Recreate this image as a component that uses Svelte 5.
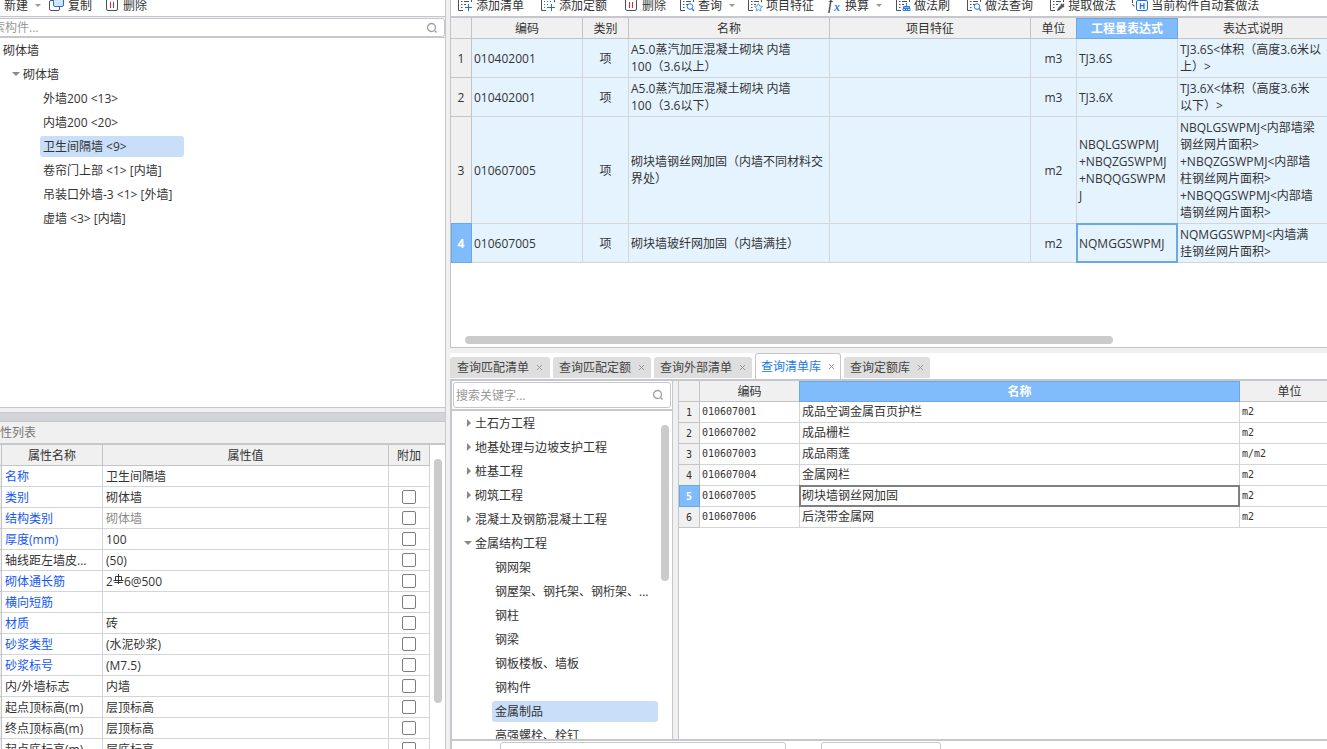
<script>
  let keyword = $state("");
  let libKeyword = $state("");
  let currentComponent = $state("卫生间隔墙 <9>");
  let currentChapter = $state("金属制品");
  let activeTab = $state("查询清单库");

  const components = [
    "外墙200 <13>",
    "内墙200 <20>",
    "卫生间隔墙 <9>",
    "卷帘门上部 <1> [内墙]",
    "吊装口外墙-3 <1> [外墙]",
    "虚墙 <3> [内墙]",
  ];

  const properties = [
    { name: "名称", value: "卫生间隔墙", blue: true, noCheck: true },
    { name: "类别", value: "砌体墙", blue: true },
    { name: "结构类别", value: "砌体墙", blue: true, muted: true },
    { name: "厚度(mm)", value: "100", blue: true },
    { name: "轴线距左墙皮...", value: "(50)" },
    { name: "砌体通长筋", value: "6@500", blue: true, rebar: "2" },
    { name: "横向短筋", value: "", blue: true },
    { name: "材质", value: "砖", blue: true },
    { name: "砂浆类型", value: "(水泥砂浆)", blue: true },
    { name: "砂浆标号", value: "(M7.5)", blue: true },
    { name: "内/外墙标志", value: "内墙" },
    { name: "起点顶标高(m)", value: "层顶标高" },
    { name: "终点顶标高(m)", value: "层顶标高" },
    { name: "起点底标高(m)", value: "层底标高" },
  ];

  const toolGroups = [
    [
      { icon: "add", label: "添加清单" },
      { icon: "addQuota", label: "添加定额" },
      { icon: "trash", label: "删除" },
    ],
    [
      { icon: "query", label: "查询", menu: true },
      { icon: "feature", label: "项目特征" },
      { icon: "fx", label: "换算", menu: true },
    ],
    [
      { icon: "brush", label: "做法刷" },
      { icon: "query", label: "做法查询" },
      { icon: "extract", label: "提取做法" },
      { icon: "auto", label: "当前构件自动套做法" },
    ],
  ];

  const items = [
    {
      code: "010402001",
      name: "A5.0蒸汽加压混凝土砌块 内墙\n100（3.6以上）",
      unit: "m3",
      expr: "TJ3.6S",
      desc: "TJ3.6S<体积（高度3.6米以\n上）>",
    },
    {
      code: "010402001",
      name: "A5.0蒸汽加压混凝土砌块 内墙\n100（3.6以下）",
      unit: "m3",
      expr: "TJ3.6X",
      desc: "TJ3.6X<体积（高度3.6米\n以下）>",
    },
    {
      code: "010607005",
      name: "砌块墙钢丝网加固（内墙不同材料交\n界处）",
      unit: "m2",
      expr: "NBQLGSWPMJ\n+NBQZGSWPMJ\n+NBQQGSWPM\nJ",
      desc: "NBQLGSWPMJ<内部墙梁\n钢丝网片面积>\n+NBQZGSWPMJ<内部墙\n柱钢丝网片面积>\n+NBQQGSWPMJ<内部墙\n墙钢丝网片面积>",
    },
    {
      code: "010607005",
      name: "砌块墙玻纤网加固（内墙满挂）",
      unit: "m2",
      expr: "NQMGGSWPMJ",
      desc: "NQMGGSWPMJ<内墙满\n挂钢丝网片面积>",
    },
  ];

  const tabs = ["查询匹配清单", "查询匹配定额", "查询外部清单", "查询清单库", "查询定额库"];

  const chapters = [
    { label: "土石方工程" },
    { label: "地基处理与边坡支护工程" },
    { label: "桩基工程" },
    { label: "砌筑工程" },
    { label: "混凝土及钢筋混凝土工程" },
    {
      label: "金属结构工程",
      children: [
        "钢网架",
        "钢屋架、钢托架、钢桁架、...",
        "钢柱",
        "钢梁",
        "钢板楼板、墙板",
        "钢构件",
        "金属制品",
        "高强螺栓、栓钉",
      ],
    },
  ];

  const library = [
    ["010607001", "成品空调金属百页护栏", "m2"],
    ["010607002", "成品栅栏", "m2"],
    ["010607003", "成品雨蓬", "m/m2"],
    ["010607004", "金属网栏", "m2"],
    ["010607005", "砌块墙钢丝网加固", "m2"],
    ["010607006", "后浇带金属网", "m2"],
  ];
</script>

{#snippet icon(kind)}
  <svg class="icon" viewBox="0 0 16 16" aria-hidden="true">
    {#if kind === "copy"}
      <rect x="0.5" y="3.5" width="10" height="10" rx="1.5" fill="#fff" stroke="#4a5162" />
      <rect x="4.5" y="-0.5" width="10" height="10" rx="1.5" fill="#cfe3fb" stroke="#1f6fe0" />
    {:else if kind === "trash"}
      <path d="M1 2.5h14M5.500 2.500v-2h5v2" stroke="#4a5162" />
      <path d="M2.500 2.500v9.500a1.500 1.500 0 0 0 1.500 1.500h8a1.500 1.500 0 0 0 1.500-1.500v-9.500" stroke="#4a5162" />
      <path d="M6.500 5v6M9.500 5v6" stroke="#d92b2b" />
    {:else if kind === "fx"}
      <text x="2" y="12" class="fx-f">f</text>
      <text x="8" y="14" class="fx-x">x</text>
    {:else if kind === "auto"}
      <path d="M0.500 1v6a2 2 0 0 0 2 2" stroke="#4a5162" stroke-dasharray="5 1" />
      <rect x="4.500" y="3.500" width="11" height="10" rx="1.500" fill="#fff" stroke="#1f6fe0" />
      <text x="10" y="12" class="auto-h">H</text>
    {:else}
      <path d="M6 13.500h-4.500v-13h13v4.500" stroke="#4a5162" />
      {#if kind === "addQuota"}
        <path d="M4 4.500h1M7 4.500h1M10 4.500h1M4 7.500h1M7 7.500h1M4 10.500h1M7 10.500h1" stroke="#1f6fe0" />
      {:else}
        <path d="M4 4.500h1.500M7 4.500h5M4 7.500h1.500M7 7.500h2M4 10.500h1.500" stroke="#4a5162" />
      {/if}
      {#if kind === "add" || kind === "addQuota"}
        <path d="M8 10.500h7M11.500 7v7" stroke="#1f6fe0" />
      {:else if kind === "query"}
        <circle cx="11" cy="9.500" r="2.800" stroke="#2f7de0" />
        <path d="M13 11.500l2 2.500" stroke="#2f7de0" stroke-width="1.300" />
      {:else if kind === "feature"}
        <path
          d="M11.500 6.500l1.300 2.500 2.700.4-2 1.900.5 2.700-2.500-1.300-2.500 1.300.5-2.700-2-1.900 2.700-.4z"
          fill="#eaf3ff"
          stroke="#4a90e2"
          stroke-width="0.800"
        />
      {:else if kind === "brush"}
        <path d="M11.500 6v3M8.500 9.500h6v1.500h-6zM8 13.500v-2h7v2zM10.500 12v1.500M12.500 12v1.500" fill="#d6e8ff" stroke="#2f7de0" />
      {:else if kind === "extract"}
        <path d="M8.500 13.500l1-2.500 3-3 1.500 1.500-3 3z" fill="#4a5162" stroke="#4a5162" stroke-width="0.800" />
        <path d="M12 7l3 3M13.500 8.500l1.500-1.500" stroke="#4a5162" stroke-width="1.600" />
      {/if}
    {/if}
  </svg>
{/snippet}

{#snippet searchIcon()}
  <svg class="search-icon" viewBox="0 0 12 12" aria-hidden="true">
    <circle cx="5.500" cy="5.500" r="4" stroke="#a0a0a0" stroke-width="1.300" />
    <path d="M8.500 8.500l2 2" stroke="#a0a0a0" stroke-width="1.300" />
  </svg>
{/snippet}

<main>
  <aside>
    <div class="toolbar component-tools">
      <div class="group">
        <button class="tool">新建<i class="caret"></i></button>
      </div>
      <div class="group">
        <button class="tool">{@render icon("copy")}复制</button>
        <button class="tool">{@render icon("trash")}删除</button>
      </div>
    </div>
    <div class="search component-search">
      <input type="text" aria-label="搜索构件" placeholder="搜索构件..." bind:value={keyword} />
      {@render searchIcon()}
    </div>
    <ul class="tree component-tree">
      <li><button class="node">砌体墙</button></li>
      <li class="level1"><button class="node"><i class="arrow open"></i>砌体墙</button></li>
      {#each components as c}
        <li class="level2">
          <button class="node" class:current={c === currentComponent} onclick={() => (currentComponent = c)}>{c}</button>
        </li>
      {/each}
    </ul>

    <div class="splitter"></div>
    <h2>属性列表</h2>
    <div class="props">
      <table>
        <colgroup>
          <col class="w22" /><col class="w101" /><col /><col class="w41" />
        </colgroup>
        <thead>
          <tr><th></th><th>属性名称</th><th>属性值</th><th>附加</th></tr>
        </thead>
        <tbody>
          {#each properties as p, i}
            <tr>
              <th>{i + 1}</th>
              <td class:blue={p.blue}>{p.name}</td>
              <td class:muted={p.muted}>
                {#if p.rebar}
                  {p.rebar}<svg class="rebar" viewBox="0 0 11 11" role="img" aria-label="三级钢">
                    <path d="M5.500 0v10M2.500 2.500h6v4h-6zM0.500 6.500h10M1.500 8.500h8" stroke="#333" />
                  </svg>{p.value}
                {:else}
                  {p.value}
                {/if}
              </td>
              <td class="check">
                {#if !p.noCheck}
                  <input type="checkbox" aria-label="附加 {p.name}" />
                {/if}
              </td>
            </tr>
          {/each}
        </tbody>
      </table>
      <div class="vbar"></div>
    </div>
  </aside>

  <div class="work">
    <section class="bill">
      <div class="toolbar">
        {#each toolGroups as group}
          <div class="group">
            {#each group as t}
              <button class="tool">
                {@render icon(t.icon)}{t.label}{#if t.menu}<i class="caret"></i>{/if}
              </button>
            {/each}
          </div>
        {/each}
      </div>
      <table>
        <colgroup>
          <col class="w21" /><col class="w111" /><col class="w46" /><col class="w201" />
          <col class="w201" /><col class="w46" /><col class="w101" /><col />
        </colgroup>
        <thead>
          <tr>
            <th></th>
            <th>编码</th>
            <th>类别</th>
            <th>名称</th>
            <th>项目特征</th>
            <th>单位</th>
            <th class="picked">工程量表达式</th>
            <th>表达式说明</th>
          </tr>
        </thead>
        <tbody>
          {#each items as item, i}
            <tr>
              <th scope="row" class:picked={i === 3}>{i + 1}</th>
              <td>{item.code}</td>
              <td class="mid">项</td>
              <td>{item.name}</td>
              <td></td>
              <td class="mid">{item.unit}</td>
              <td class:focused={i === 3}>{item.expr}</td>
              <td>{item.desc}</td>
            </tr>
          {/each}
        </tbody>
      </table>
      <div class="hbar"></div>
    </section>

    <nav class="tabs">
      {#each tabs as tab}
        <button class="tab" class:active={tab === activeTab} onclick={() => (activeTab = tab)}>
          {tab}
          <svg viewBox="0 0 7 7" aria-hidden="true"><path d="M1 1l5 5M6 1l-5 5" stroke="#999" /></svg>
        </button>
      {/each}
    </nav>

    <div class="lookup">
      <div class="chapters">
        <div class="search lib-search">
          <input type="text" aria-label="搜索关键字" placeholder="搜索关键字..." bind:value={libKeyword} />
          {@render searchIcon()}
        </div>
        <div class="chapter-list">
          <ul class="tree">
            {#each chapters as ch}
              <li class="level1">
                <button class="node"><i class="arrow" class:open={ch.children}></i>{ch.label}</button>
              </li>
              {#each ch.children ?? [] as child}
                <li class="level2">
                  <button class="node" class:current={child === currentChapter} onclick={() => (currentChapter = child)}>
                    {child}
                  </button>
                </li>
              {/each}
            {/each}
          </ul>
          <div class="vbar"></div>
        </div>
      </div>
      <div class="results">
        <table>
          <colgroup>
            <col class="w21" /><col class="w100" /><col /><col class="w100" />
          </colgroup>
          <thead>
            <tr><th></th><th>编码</th><th class="picked">名称</th><th>单位</th></tr>
          </thead>
          <tbody>
            {#each library as [code, name, unit], i}
              <tr>
                <th scope="row" class:picked={i === 4}>{i + 1}</th>
                <td class="mono">{code}</td>
                <td class:focused={i === 4}>{name}</td>
                <td class="mono">{unit}</td>
              </tr>
            {/each}
          </tbody>
        </table>
      </div>
    </div>

    <footer>
      <input class="wide" type="text" aria-label="章节" />
      <input type="text" aria-label="专业" />
    </footer>
  </div>
</main>

<style>
  :global(body) {
    background: #f0f0f0;
  }
  main {
    display: flex;
    gap: 4px;
    height: 100vh;
    overflow: hidden;
    font: 12px/17px "Open Sans", "Noto Sans CJK SC", sans-serif;
    color: #333;
  }
  button,
  input {
    font: inherit;
    color: inherit;
  }
  button {
    border: 0;
    padding: 0;
    background: none;
    white-space: nowrap;
  }
  svg {
    fill: none;
    flex: none;
  }

  /* the component pane runs a little past the left edge of the window */
  aside {
    flex: 0 0 466px;
    box-sizing: border-box;
    margin-left: -20px;
    display: flex;
    flex-direction: column;
    border-right: 1px solid #c8c8cc;
  }
  .work {
    flex: 1;
    min-width: 0;
    display: flex;
    flex-direction: column;
  }

  .toolbar {
    flex: none;
    display: flex;
    align-items: flex-end;
    gap: 13px;
    height: 15px;
    padding: 0 6px 1px;
    background: #fff;
    border-bottom: 2px solid #c5c7cd;
    overflow: hidden;
  }
  .component-tools {
    padding-left: 24px;
    gap: 8px;
    border-bottom-width: 1px;
  }
  .group {
    display: flex;
    gap: 16px;
  }
  .group:nth-child(2) {
    gap: 12px;
  }
  .tool {
    display: flex;
    align-items: center;
    gap: 3px;
    height: 20px;
  }
  .icon {
    width: 16px;
    height: 16px;
  }
  .fx-f {
    font: italic 16px "Liberation Serif", serif;
    fill: #333a4a;
  }
  .fx-x {
    font: italic bold 12px "Liberation Serif", serif;
    fill: #2f7de0;
  }
  .auto-h {
    font: bold 8px "Open Sans", sans-serif;
    fill: #1f6fe0;
    text-anchor: middle;
  }
  .caret {
    margin-left: 4px;
    border: 3px solid transparent;
    border-top-color: #999;
    border-bottom: 0;
  }

  .search {
    flex: none;
    display: flex;
    align-items: center;
    box-sizing: border-box;
    background: #fff;
    border: 1px solid #c8c8cc;
    border-radius: 3px;
  }
  .search input {
    flex: 1;
    min-width: 0;
    border: 0;
    padding: 0;
    outline: 0;
    background: none;
  }
  .search input::placeholder {
    color: #999;
    opacity: 1;
  }
  .search-icon {
    width: 12px;
    height: 12px;
    margin-right: 6px;
  }
  .component-search {
    height: 19px;
    margin-top: 1px;
  }
  .lib-search {
    height: 26px;
    margin: 1px 1px 0;
    padding-left: 2px;
  }

  .tree {
    list-style: none;
    margin: 0;
    padding: 0;
    background: #fff;
  }
  .tree li {
    display: flex;
    align-items: center;
    height: 24px;
  }
  .node {
    height: 21px;
    padding: 0 3px;
    border-radius: 3px;
    text-align: left;
  }
  .level1 .node {
    display: flex;
    align-items: center;
  }
  .node.current {
    background: #c9dff9;
  }
  .arrow {
    margin-right: 4px;
    border: 4px solid transparent;
    border-left-color: #888;
    border-right: 0;
  }
  .arrow.open {
    margin: 0 3px 0 -3px;
    border: 4px solid transparent;
    border-top-color: #888;
    border-bottom: 0;
  }
  .component-tree {
    flex: 0 0 369px;
    padding-left: 20px;
    border-top: 1px solid #c5c7cd;
    border-bottom: 1px solid #c8c8cc;
  }
  .component-tree .level1 {
    padding-left: 12px;
  }
  .component-tree .level2 {
    padding-left: 40px;
  }
  .component-tree .node.current {
    min-width: 144px;
  }

  .splitter {
    flex: none;
    height: 8px;
    margin-top: 4px;
    background: #d3d4da;
    border: solid #c6c7cc;
    border-width: 1px 0;
  }
  h2 {
    flex: none;
    margin: 0;
    padding-left: 8px;
    font-size: 12px;
    font-weight: normal;
    line-height: 21px;
    color: #777;
    border-bottom: 2px solid #c5c7c9;
  }
  .props {
    flex: 1;
    min-height: 0;
    display: flex;
    background: #fff;
    overflow: hidden;
  }
  .props table {
    flex: 1;
    height: 0;
  }
  .props td {
    padding: 0 3px;
  }
  .props .vbar {
    height: 244px;
    margin: 14px 3px 0 4px;
  }
  .blue {
    color: #1457f5;
  }
  .muted {
    color: #8a8a8a;
  }
  .rebar {
    width: 11px;
    height: 11px;
    vertical-align: 1px;
  }
  .props .check {
    padding: 0;
    text-align: center;
  }
  .check input {
    appearance: none;
    display: block;
    width: 14px;
    height: 14px;
    margin: 0 auto;
    border: 1px solid #7d7d7d;
    border-radius: 2px;
    background: #fff;
  }
  .vbar {
    flex: 0 0 8px;
    background: #cbcbcb;
    border-radius: 4px;
  }

  table {
    width: 100%;
    table-layout: fixed;
    border-spacing: 0;
  }
  th,
  td {
    box-sizing: border-box;
    height: 21px;
    padding: 0 2px;
    border: solid #d4d5d7;
    border-width: 0 1px 1px 0;
    white-space: nowrap;
    overflow: hidden;
    text-align: left;
  }
  th {
    padding: 0;
    background: #f0f0f0;
    border-color: #c4c4c6;
    font-weight: normal;
    text-align: center;
  }
  .picked,
  .focused {
    position: relative;
    overflow: visible;
  }
  .picked {
    background: #80bbfb;
    color: #fff;
    font-weight: bold;
  }
  .picked::after,
  .focused::after {
    content: "";
    position: absolute;
    inset: -1px;
    border: 2px solid #6aa9e6;
  }
  .picked::after {
    border-width: 1px;
  }
  thead .picked::after {
    top: 0;
  }
  tbody .picked::after {
    left: 0;
  }
  .w21 {
    width: 21px;
  }
  .w22 {
    width: 22px;
  }
  .w41 {
    width: 41px;
  }
  .w46 {
    width: 46px;
  }
  .w100 {
    width: 100px;
  }
  .w101 {
    width: 101px;
  }
  .w111 {
    width: 111px;
  }
  .w201 {
    width: 201px;
  }

  .bill {
    flex: 0 0 348px;
    box-sizing: border-box;
    display: flex;
    flex-direction: column;
    background: #fff;
    border: solid #c4c4c8;
    border-width: 0 0 1px 1px;
    overflow: hidden;
  }
  .bill table {
    width: calc(100% + 2px);
  }
  .bill td {
    padding: 2px;
    background: #e5f3ff;
    white-space: pre;
  }
  .bill .mid {
    text-align: center;
  }
  .hbar {
    width: 74%;
    height: 8px;
    margin: auto 0 3px 14px;
    background: #cbcbcb;
    border-radius: 4px;
  }

  .tabs {
    flex: none;
    display: flex;
    align-items: flex-end;
    gap: 3px;
    height: 26px;
    margin-top: 5px;
    background: #fff;
    border-bottom: 2px solid #c5c7cd;
  }
  .tab {
    display: flex;
    align-items: center;
    gap: 7px;
    height: 21px;
    margin-bottom: 1px;
    padding: 0 6px;
    background: #dedede;
    border-radius: 3px 3px 0 0;
    color: #444;
  }
  .tab:first-child {
    padding: 0 7px;
  }
  .tab svg {
    width: 7px;
    height: 7px;
  }
  .tab.active {
    height: 26px;
    margin-bottom: 0;
    padding: 0 5px;
    background: #fff;
    border: 1px solid #c5c7cd;
    border-bottom: 0;
    box-sizing: border-box;
    color: #1d7be0;
  }

  .lookup {
    flex: 1;
    min-height: 0;
    display: flex;
    gap: 5px;
  }
  .chapters {
    flex: 0 0 223px;
    min-width: 0;
    box-sizing: border-box;
    display: flex;
    flex-direction: column;
    background: #fff;
    border: solid #c5c7cd;
    border-width: 0 1px 0 2px;
  }
  .chapter-list {
    flex: 1;
    min-height: 0;
    display: flex;
    margin-top: 1px;
    border-top: 2px solid #c5c7cd;
    overflow: hidden;
  }
  .chapter-list .tree {
    flex: 1;
    min-width: 0;
  }
  .chapter-list .level1 {
    padding-left: 12px;
  }
  .chapter-list .level2 {
    padding-left: 40px;
  }
  .chapter-list .level2 .node {
    flex: 1;
    min-width: 0;
  }
  .chapter-list .vbar {
    height: 156px;
    margin: 14px 3px 0;
  }
  .results {
    flex: 1;
    min-width: 0;
    background: #fff;
    border-left: 1px solid #c5c7cd;
    overflow: hidden;
  }
  .results table {
    width: calc(100% + 13px);
  }
  .results tbody th,
  .results .mono {
    font-family: "DejaVu Sans Mono", monospace;
    font-size: 10px;
  }
  .results td {
    padding: 0 2px 2px;
  }
  .results .focused::after {
    border-color: #808080;
  }

  footer {
    flex: none;
    display: flex;
    align-items: flex-start;
    gap: 35px;
    height: 8px;
    padding-left: 48px;
    background: #fff;
    border: solid #c5c7cd;
    border-width: 2px 0 0 2px;
    overflow: hidden;
  }
  footer input {
    box-sizing: border-box;
    width: 120px;
    height: 24px;
    margin-top: 1px;
    border: 1px solid #c8c8cc;
    border-radius: 3px;
  }
  footer .wide {
    width: 286px;
  }
</style>
